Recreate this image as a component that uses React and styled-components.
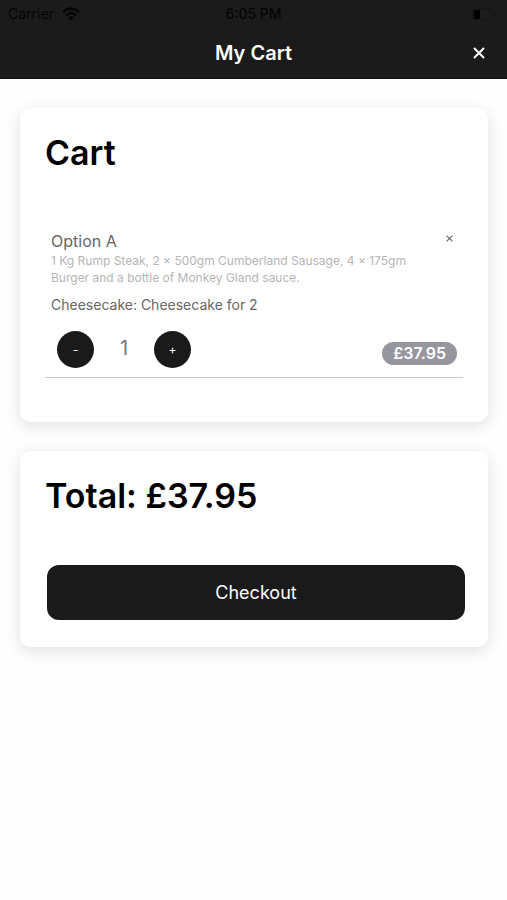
import React, { useState } from 'react';
import styled, { createGlobalStyle } from 'styled-components';

const GlobalStyle = createGlobalStyle`
    * {
        box-sizing: border-box;
    }

    body {
        margin: 0;
        background-color: #fefefe;
        font-family: Inter, "Liberation Sans", sans-serif;
        color: #000;
    }

    button {
        font-family: inherit;
        cursor: pointer;
    }
`

const Header = styled.header`
    height: 79px;
    background-color: #1b1b1b;
    border-bottom: 1px solid #111;
`

const StatusBar = styled.div`
    display: grid;
    grid-template-columns: 1fr auto 1fr;
    align-items: center;
    height: 28px;
    padding: 0 8px;
    color: #050505;
    font-size: 14px;
    line-height: 28px;
`

const Carrier = styled.div`
    display: flex;
    align-items: center;
    gap: 8px;
`

const Clock = styled.span`
    font-weight: 500;
`

const BatteryIcon = styled.svg`
    justify-self: end;
`

const Toolbar = styled.div`
    display: grid;
    grid-template-columns: 1fr auto 1fr;
    align-items: center;
    height: 50px;
    padding: 0 16px;
`

const PageTitle = styled.h1`
    grid-column: 2;
    margin: 0;
    color: #fff;
    font-size: 20px;
    font-weight: 600;
    line-height: 24px;
`

const IconButton = styled.button`
    display: flex;
    align-items: center;
    justify-content: center;
    justify-self: end;
    width: ${props => props.$small ? 16 : 24}px;
    height: ${props => props.$small ? 14 : 24}px;
    padding: 0;
    border: 0;
    background: none;
    color: ${props => props.$small ? '#666' : '#fff'};
`

const Content = styled.main`
    display: flex;
    flex-direction: column;
    gap: 29px;
    padding: 29px 19px 29px 20px;
`

const Card = styled.section`
    padding: 25px;
    border-radius: 10px;
    background-color: #fff;
    box-shadow: 0 4px 16px rgba(0, 0, 0, 0.12);
`

const CardTitle = styled.h2`
    margin: 0;
    font-size: 34px;
    font-weight: 600;
    line-height: 40px;
`

const CartList = styled.ul`
    margin: 58px 0 19px;
    padding: 0;
    list-style: none;
`

const CartItem = styled.li`
    padding: 0 6px 9px;
    border-bottom: 1px solid #c8c8c8;
`

const ItemTop = styled.div`
    display: flex;
    justify-content: space-between;
    align-items: flex-start;
`

const ItemName = styled.h3`
    margin: 0;
    color: #666;
    font-size: 16px;
    font-weight: 400;
    line-height: 20px;
`

const Description = styled.p`
    margin: 1px 24px 9px 0;
    color: #b5b5b5;
    font-size: 12px;
    line-height: 17px;
`

const Extra = styled.p`
    margin: 0 0 16px;
    color: #666;
    font-size: 14px;
    line-height: 20px;
`

const ItemBottom = styled.div`
    display: flex;
    justify-content: space-between;
    align-items: flex-end;
`

const Stepper = styled.div`
    display: flex;
    align-items: center;
    padding-left: 6px;
`

const StepButton = styled.button`
    width: 37px;
    height: 37px;
    padding: 0;
    border: 0;
    border-radius: 50%;
    background-color: #1a1a1a;
    color: #fff;
    font-size: 12px;
    line-height: 36px;
`

const Quantity = styled.span`
    width: 60px;
    padding-bottom: 4px;
    color: #777;
    font-size: 20px;
    line-height: 24px;
    text-align: center;
`

const Price = styled.span`
    margin-bottom: 3px;
    padding: 0 11px;
    border-radius: 12px;
    background-color: #96969e;
    color: #fff;
    font-size: 16px;
    font-weight: 600;
    line-height: 23px;
`

const CheckoutButton = styled.button`
    display: block;
    width: 100%;
    height: 55px;
    margin: 49px 0 2px 2px;
    border: 0;
    border-radius: 12px;
    background-color: #1a1a1a;
    color: #fff;
    font-size: 18px;
    line-height: 24px;
`

const Cross = ({ size, stroke }) => (
    <svg width={size} height={size} viewBox="0 0 12 12" fill="none" stroke="currentColor" strokeWidth={stroke} aria-hidden="true">
        <path d="M1 1l10 10M11 1L1 11" />
    </svg>
)

const Wifi = () => (
    <svg width="18" height="14" viewBox="0 0 18 14" fill="none" stroke="currentColor" strokeWidth="2.4" aria-hidden="true">
        <path d="M1 5Q9-2 17 5M4 8.4Q9 3.8 14 8.4" />
        <path d="M9 13.4L6 10.4Q9 8 12 10.4Z" fill="currentColor" stroke="none" />
    </svg>
)

const Battery = () => (
    <BatteryIcon width="27" height="13" viewBox="0 0 27 13" aria-hidden="true">
        <rect x="1" y="1" width="22" height="11" rx="3" fill="none" stroke="#151515" />
        <rect x="2" y="2" width="6" height="9" rx="1" fill="#000" />
        <path d="M25 4.5v4q1.5-.6 1.5-2t-1.5-2" fill="#151515" />
    </BatteryIcon>
)

const UNIT_PRICE = 37.95;

const App = () => {
    const [quantity, setQuantity] = useState(1);
    const total = `£${(UNIT_PRICE * quantity).toFixed(2)}`;

    return (
        <>
            <GlobalStyle />
            <Header>
                <StatusBar>
                    <Carrier>Carrier <Wifi /></Carrier>
                    <Clock>6:05 PM</Clock>
                    <Battery />
                </StatusBar>
                <Toolbar>
                    <PageTitle>My Cart</PageTitle>
                    <IconButton aria-label="Close">
                        <Cross size={12} stroke={2} />
                    </IconButton>
                </Toolbar>
            </Header>
            <Content>
                <Card>
                    <CardTitle>Cart</CardTitle>
                    <CartList>
                        <CartItem>
                            <ItemTop>
                                <ItemName>Option A</ItemName>
                                <IconButton $small aria-label="Remove Option A">
                                    <Cross size={7} stroke={2} />
                                </IconButton>
                            </ItemTop>
                            <Description>
                                1 Kg Rump Steak, 2 × 500gm Cumberland Sausage, 4 × 175gm Burger and a bottle of Monkey Gland sauce.
                            </Description>
                            <Extra>Cheesecake: Cheesecake for 2</Extra>
                            <ItemBottom>
                                <Stepper>
                                    <StepButton aria-label="Remove one" onClick={() => setQuantity(Math.max(1, quantity - 1))}>-</StepButton>
                                    <Quantity>{quantity}</Quantity>
                                    <StepButton aria-label="Add one" onClick={() => setQuantity(quantity + 1)}>+</StepButton>
                                </Stepper>
                                <Price>{total}</Price>
                            </ItemBottom>
                        </CartItem>
                    </CartList>
                </Card>
                <Card>
                    <CardTitle>Total: {total}</CardTitle>
                    <CheckoutButton>Checkout</CheckoutButton>
                </Card>
            </Content>
        </>
    );
}

export default App;
